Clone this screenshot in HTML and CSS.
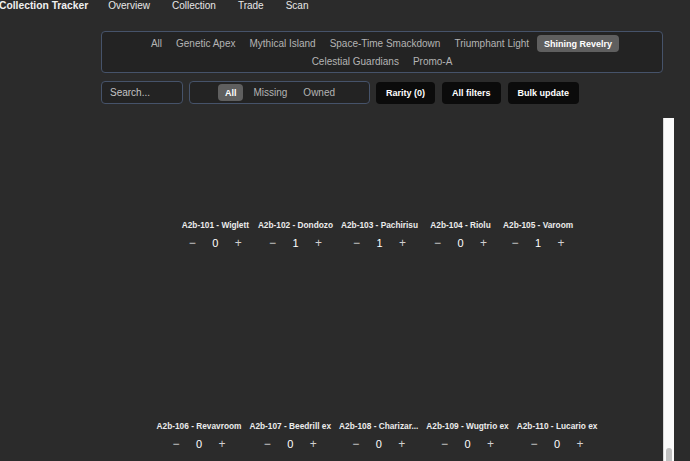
FILE: index.html
```html
<!DOCTYPE html>
<html lang="en">
<head>
    <meta charset="UTF-8">
    <meta name="viewport" content="width=device-width, initial-scale=1.0">
    <title>Collection Tracker</title>
    <link rel="stylesheet" href="styles.css">
</head>
<body>
    <header class="topbar">
        <span class="brand">Collection Tracker</span>
        <nav class="nav">
            <a href="#">Overview</a>
            <a href="#">Collection</a>
            <a href="#">Trade</a>
            <a href="#">Scan</a>
        </nav>
    </header>

    <main class="main">
        <div class="set-panel">
            <div class="set-row">
                <button class="tab">All</button>
                <button class="tab">Genetic Apex</button>
                <button class="tab">Mythical Island</button>
                <button class="tab">Space-Time Smackdown</button>
                <button class="tab">Triumphant Light</button>
                <button class="tab active">Shining Revelry</button>
            </div>
            <div class="set-row">
                <button class="tab">Celestial Guardians</button>
                <button class="tab">Promo-A</button>
            </div>
        </div>

        <div class="controls">
            <input type="text" class="search" placeholder="Search...">
            <div class="segment">
                <button class="tab active">All</button>
                <button class="tab">Missing</button>
                <button class="tab">Owned</button>
            </div>
            <button class="btn">Rarity (0)</button>
            <button class="btn">All filters</button>
            <button class="btn">Bulk update</button>
        </div>

        <div class="results">
            <div class="cards">
                <div class="cards-inner">
                    <div class="card-row">
                        <div class="card">
                            <div class="card-img"></div>
                            <div class="card-name">A2b-101 - Wiglett</div>
                            <div class="counter"><span class="op">&minus;</span><span class="num">0</span><span class="op">+</span></div>
                        </div>
                        <div class="card">
                            <div class="card-img"></div>
                            <div class="card-name">A2b-102 - Dondozo</div>
                            <div class="counter"><span class="op">&minus;</span><span class="num">1</span><span class="op">+</span></div>
                        </div>
                        <div class="card">
                            <div class="card-img"></div>
                            <div class="card-name">A2b-103 - Pachirisu</div>
                            <div class="counter"><span class="op">&minus;</span><span class="num">1</span><span class="op">+</span></div>
                        </div>
                        <div class="card">
                            <div class="card-img"></div>
                            <div class="card-name">A2b-104 - Riolu</div>
                            <div class="counter"><span class="op">&minus;</span><span class="num">0</span><span class="op">+</span></div>
                        </div>
                        <div class="card">
                            <div class="card-img"></div>
                            <div class="card-name">A2b-105 - Varoom</div>
                            <div class="counter"><span class="op">&minus;</span><span class="num">1</span><span class="op">+</span></div>
                        </div>
                    </div>
                    <div class="card-row">
                        <div class="card">
                            <div class="card-img"></div>
                            <div class="card-name">A2b-106 - Revavroom</div>
                            <div class="counter"><span class="op">&minus;</span><span class="num">0</span><span class="op">+</span></div>
                        </div>
                        <div class="card">
                            <div class="card-img"></div>
                            <div class="card-name">A2b-107 - Beedrill ex</div>
                            <div class="counter"><span class="op">&minus;</span><span class="num">0</span><span class="op">+</span></div>
                        </div>
                        <div class="card">
                            <div class="card-img"></div>
                            <div class="card-name">A2b-108 - Charizar...</div>
                            <div class="counter"><span class="op">&minus;</span><span class="num">0</span><span class="op">+</span></div>
                        </div>
                        <div class="card">
                            <div class="card-img"></div>
                            <div class="card-name">A2b-109 - Wugtrio ex</div>
                            <div class="counter"><span class="op">&minus;</span><span class="num">0</span><span class="op">+</span></div>
                        </div>
                        <div class="card">
                            <div class="card-img"></div>
                            <div class="card-name">A2b-110 - Lucario ex</div>
                            <div class="counter"><span class="op">&minus;</span><span class="num">0</span><span class="op">+</span></div>
                        </div>
                    </div>
                </div>
            </div>
            <div class="scrollbar">
                <div class="thumb"></div>
            </div>
        </div>
    </main>
</body>
</html>
```

FILE: styles.css
```css
:root {
    --bg-color: #2b2b2b;
    --panel-color: #232323;
    --border-color: #46536a;
    --text-color: #e6e6e6;
    --muted-color: #b4b4b4;
    --pill-color: #5f5f5f;
}

* {
    margin: 0;
    padding: 0;
    box-sizing: border-box;
}

html, body {
    height: 100%;
    overflow: hidden;
}

body {
    font-family: 'Liberation Sans', Arial, sans-serif;
    background-color: var(--bg-color);
    color: var(--text-color);
}

button {
    font-family: inherit;
    border: none;
    background: none;
    cursor: pointer;
}

.topbar {
    display: flex;
    align-items: center;
    gap: 20px;
    height: 11px;
    margin-left: -1px;
}

.brand {
    font-size: 10.3px;
    font-weight: bold;
    line-height: 11px;
    color: #f0f0f0;
}

.nav {
    display: flex;
    gap: 22px;
}

.nav a {
    font-size: 10px;
    line-height: 11px;
    color: #e8e8e8;
    text-decoration: none;
}

.main {
    margin: 20px 0 0 101px;
    width: 573px;
}

.set-panel {
    width: 562px;
    background-color: var(--panel-color);
    border: 1px solid var(--border-color);
    border-radius: 4px;
    padding: 3px 0 2px;
    display: flex;
    flex-direction: column;
    gap: 1px;
}

.set-row {
    display: flex;
    justify-content: center;
    gap: 2px;
}

.tab {
    height: 17px;
    padding: 0 6px;
    border-radius: 4px;
    font-size: 10px;
    color: var(--muted-color);
}

.tab.active {
    background-color: var(--pill-color);
    color: #fff;
    font-weight: bold;
    font-size: 9px;
    padding: 0 7px;
}

.controls {
    display: flex;
    align-items: center;
    margin-top: 8px;
}

.search {
    width: 82px;
    height: 23px;
    padding: 0 8px;
    background-color: var(--panel-color);
    border: 1px solid var(--border-color);
    border-radius: 4px;
    font-family: inherit;
    font-size: 10px;
    color: var(--text-color);
}

.search::placeholder {
    color: #c4c4c4;
}

.segment {
    display: flex;
    justify-content: center;
    align-items: center;
    gap: 4px;
    width: 181px;
    height: 23px;
    margin: 0 6px;
    background-color: var(--panel-color);
    border: 1px solid var(--border-color);
    border-radius: 4px;
}

.btn {
    height: 22px;
    padding: 0 10px;
    margin-right: 7px;
    background-color: #0b0b0b;
    border-radius: 4px;
    font-size: 9px;
    font-weight: bold;
    color: #fff;
}

.results {
    display: flex;
    height: 360px;
    margin-top: 14px;
}

.cards {
    flex: 1;
    overflow: hidden;
    padding-right: 10px;
}

/* list is scrolled down a bit, first row of images is cut off */
.cards-inner {
    margin-top: -66px;
}

.card-row {
    display: flex;
    justify-content: center;
    gap: 8px;
}

.card {
    display: flex;
    flex-direction: column;
    align-items: center;
}

.card-img {
    height: 167px;
}

.card-name {
    font-size: 8.3px;
    font-weight: bold;
    line-height: 12px;
    color: #ececec;
    white-space: nowrap;
}

.counter {
    display: flex;
    margin-top: 2px;
    height: 20px;
    align-items: center;
}

.counter span {
    width: 23px;
    text-align: center;
    font-size: 11px;
}

.counter .op {
    color: #d0d0d0;
    font-size: 12px;
}

.counter .num {
    color: #fff;
}

.scrollbar {
    width: 11px;
    background-color: #fafafa;
    border-left: 1px solid #d8d8d8;
    padding: 330px 0 0 2px;
}

.thumb {
    width: 6px;
    height: 40px;
    background-color: #c1c1c1;
    border-radius: 3px;
}
```
